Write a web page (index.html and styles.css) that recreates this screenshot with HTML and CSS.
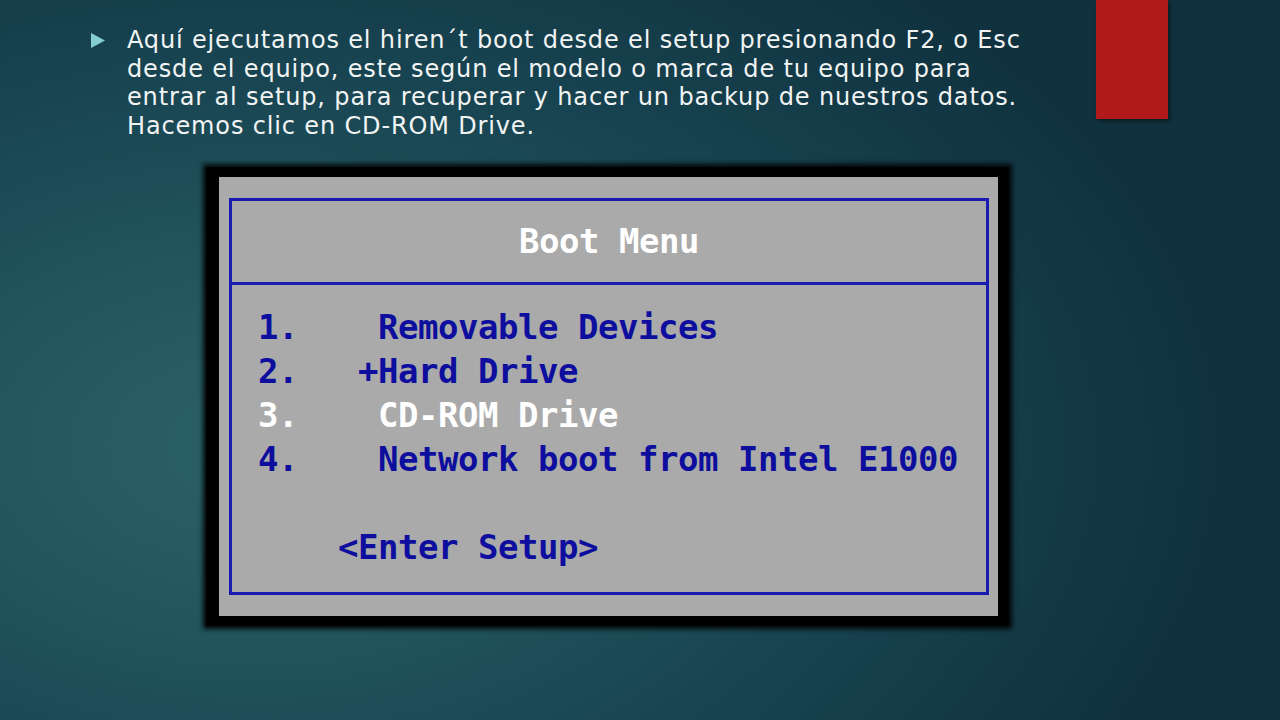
FILE: index.html
```html
<!DOCTYPE html>
<html lang="es">
<head>
    <meta charset="UTF-8">
    <title>Boot Menu</title>
    <link rel="stylesheet" href="styles.css">
</head>
<body>
    <div class="slide">
        <div class="accent"></div>

        <div class="bullet-row">
            <svg class="bullet" width="14" height="15" viewBox="0 0 14 15">
                <polygon points="0,0 14,7.5 0,15" fill="#86cfd0"/>
            </svg>
            <p class="caption">Aquí ejecutamos el hiren´t boot desde el setup presionando F2, o Esc<br>desde el equipo, este según el modelo o marca de tu equipo para<br>entrar al setup, para recuperar y hacer un backup de nuestros datos.<br>Hacemos clic en CD-ROM Drive.</p>
        </div>

        <div class="bios-frame">
            <div class="bios-screen">
                <div class="bios-box">
                    <div class="bios-title">Boot Menu</div>
                    <div class="bios-list">
                        <div class="bios-line">1.    Removable Devices</div>
                        <div class="bios-line">2.   +Hard Drive</div>
                        <div class="bios-line selected">3.    CD-ROM Drive</div>
                        <div class="bios-line">4.    Network boot from Intel E1000</div>
                        <div class="bios-line"> </div>
                        <div class="bios-line">    &lt;Enter Setup&gt;</div>
                    </div>
                </div>
            </div>
        </div>
    </div>
</body>
</html>
```

FILE: styles.css
```css
body {
    margin: 0;
    padding: 0;
    background: #0f3140;
}

.slide {
    position: relative;
    width: 1280px;
    height: 720px;
    overflow: hidden;
    background: radial-gradient(ellipse 75% 85% at 20% 62%, #2b6266 0%, #22565e 30%, #184451 62%, #10323f 100%);
}

/* red tab in the top right corner */
.accent {
    position: absolute;
    top: 0;
    left: 1096px;
    width: 72px;
    height: 119px;
    background: #b01a18;
    box-shadow: 2px 2px 4px rgba(0, 0, 0, 0.45);
}

.bullet-row {
    display: flex;
    align-items: flex-start;
    padding: 26px 0 0 91px;
}

.bullet {
    margin-top: 7px;
    flex-shrink: 0;
}

.caption {
    margin: 0 0 0 22px;
    font-family: "DejaVu Sans", sans-serif;
    font-size: 24px;
    line-height: 28.5px;
    letter-spacing: 0.85px;
    color: #f2f4f4;
    white-space: nowrap;
}

.bios-frame {
    width: 779px;
    margin: 27px 0 0 206px;
    padding: 10px 11px 10px 13px;
    background: #000;
    box-shadow: 0 0 5px 3px rgba(0, 0, 0, 0.9);
}

.bios-screen {
    background: #aaaaaa;
    padding: 21px 9px 21px 10px;
}

.bios-box {
    border: 3px solid #1a1ab0;
    height: 391px;
    font-family: "DejaVu Sans Mono", monospace;
    font-weight: bold;
    font-size: 34px;
    letter-spacing: -0.47px;
    line-height: 44px;
    color: #0e0e9e;
}

.bios-title {
    height: 84px;
    padding-top: 18px;
    box-sizing: border-box;
    text-align: center;
    color: #ffffff;
    border-bottom: 3px solid #1a1ab0;
}

.bios-list {
    padding: 20px 0 0 26px;
}

.bios-line {
    white-space: pre;
    height: 44px;
}

.bios-line.selected {
    color: #ffffff;
}
```
